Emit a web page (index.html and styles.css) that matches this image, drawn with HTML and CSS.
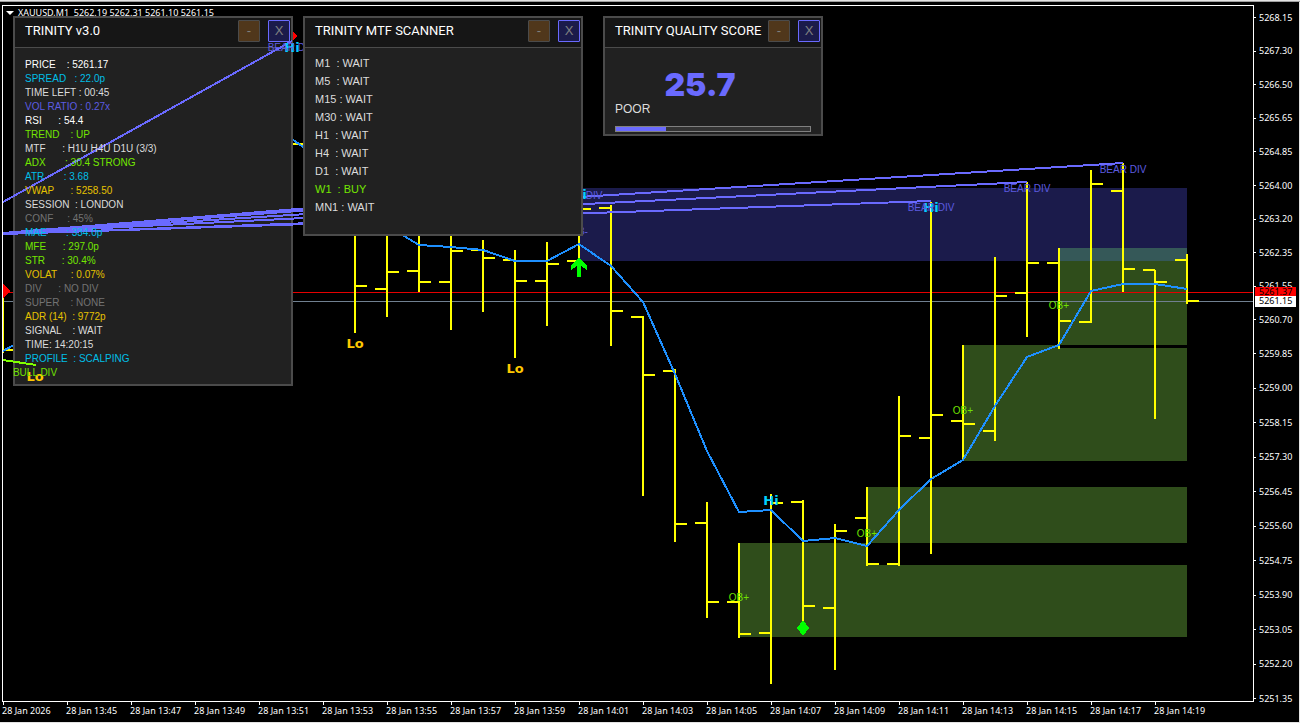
FILE: index.html
```html
<!DOCTYPE html>
<html lang="en">
<head>
    <meta charset="UTF-8">
    <meta name="viewport" content="width=device-width, initial-scale=1.0">
    <title>XAUUSD,M1</title>
    <link rel="stylesheet" href="styles.css">
</head>
<body>

<main class="terminal">
    <section class="plot">
        <h1 class="symbol">
            <svg width="8" height="5" aria-hidden="true"><path d="M0 0h8l-4 4z" fill="#fff"/></svg>
            <span>XAUUSD,M1&nbsp; 5262.19 5262.31 5261.10 5261.15</span>
        </h1>

        <!-- zones, price lines, bars and moving average -->
        <svg class="chart" viewBox="3 6 1250 695" preserveAspectRatio="xMinYMin meet">
            <g class="zones">
                <rect class="supply" x="579" y="188" width="608" height="73"/>
                <path class="demand" d="M1059 261H1187V345H1059zM963 345H1059V348H1187V461H963zM867 487H1187V543H867zM739 543H867V565H1187V637H739z"/>
                <rect class="overlap" x="1059" y="248" width="128" height="13"/>
            </g>
            <g class="levels">
                <rect class="ask" x="3" y="292" width="1250" height="1"/>
                <rect class="bid" x="3" y="301" width="1250" height="1"/>
            </g>
            <g class="bars">
                <path d="M3 297V353M3 350h12M291 144h12"/>
                <path d="M355 225V333M355 286h12"/>
                <path d="M387 225V317M375 289h12M387 272h12"/>
                <path d="M419 225V292M407 271h12M419 282h12"/>
                <path d="M451 225V330M439 282h12M451 251h12"/>
                <path d="M483 240V312M471 250h12M483 258h12"/>
                <path d="M515 250V358M503 260h12M515 281h12"/>
                <path d="M547 242V326M535 281h12M547 264h12"/>
                <path d="M579 200V262M567 261h12M579 209h12"/>
                <path d="M611 205V346M599 208h12M611 311h12"/>
                <path d="M643 316V496M631 317h12M643 375h12"/>
                <path d="M675 369V542M663 371h12M675 524h12"/>
                <path d="M707 502V618M695 523h12M707 602h12"/>
                <path d="M739 543V638M727 602h12M739 634h12"/>
                <path d="M771 494V684M759 633h12M771 503h12"/>
                <path d="M803 500V624M791 502h12M803 606h12"/>
                <path d="M835 524V670M823 608h12M835 531h12"/>
                <path d="M867 487V566M855 518h12M867 564h12"/>
                <path d="M899 396V566M887 564h12M899 436h12"/>
                <path d="M931 202V554M919 438h12M931 415h12"/>
                <path d="M963 345V461M951 421h12M963 424h12"/>
                <path d="M995 257V441M983 431h12M995 296h12"/>
                <path d="M1027 182V337M1015 293h12M1027 263h12"/>
                <path d="M1059 248V349M1047 263h12M1059 321h12"/>
                <path d="M1091 170V323M1079 322h12M1091 184h12"/>
                <path d="M1123 163V292M1111 191h12M1123 269h12"/>
                <path d="M1155 270V419M1143 270h12M1155 282h12"/>
                <path d="M1187 254V304M1175 260h12M1187 301h12"/>
            </g>
            <polyline class="average" points="3,351 14,345"/>
            <polyline class="average" points="292,139 303,147 404,236 419,245 451,247 483,250 515,261 547,261 579,244 611,266 643,302 675,374 707,451 739,512 771,510 803,541 835,538 867,546 899,510 931,479 963,460 995,406 1027,357 1059,345 1091,291 1123,284 1155,284 1187,289"/>
            <path class="sell" d="M3 283l7 8-7 8zM290 28l7 8-7 8z"/>
            <path class="buy" d="M579 258l8 7v5l-6-4v11h-4v-11l-6 4v-5zM803 620l6 8-6 8-6-8z"/>
        </svg>

        <!-- divergence lines and chart labels, drawn over the main panel -->
        <svg class="chart marks" viewBox="3 6 1250 695" preserveAspectRatio="xMinYMin meet">
            <path class="bear-line" d="M3 202L292 41M3 233L579 186M3 233L579 190M3 233L1123 163M3 233L1027 182M3 234L931 201M3 234L583 215"/>
            <path class="bull-line" d="M3 360L36 365"/>
            <g class="swing high">
                <text x="292" y="52">Hi</text>
                <text x="579" y="199">Hi</text>
                <text x="771" y="505">Hi</text>
                <text x="931" y="212">Hi</text>
            </g>
            <g class="swing low">
                <text x="35" y="381">Lo</text>
                <text x="355" y="348">Lo</text>
                <text x="515" y="373">Lo</text>
            </g>
            <g class="tag bear">
                <text x="291" y="51">BEAR DIV</text>
                <text x="579" y="199">BEAR DIV</text>
                <text x="931" y="211">BEAR DIV</text>
                <text x="1027" y="192">BEAR DIV</text>
                <text x="1123" y="173">BEAR DIV</text>
                <text x="579" y="235">OB-</text>
            </g>
            <g class="tag bull">
                <text x="35" y="376">BULL DIV</text>
                <text x="739" y="601">OB+</text>
                <text x="867" y="537">OB+</text>
                <text x="963" y="414">OB+</text>
                <text x="1059" y="309">OB+</text>
            </g>
        </svg>

        <div class="panels">
            <section class="panel">
                <header class="panel-head">
                    <h2>TRINITY v3.0</h2>
                    <button class="minimize" type="button" aria-label="Minimize">-</button>
                    <button class="close" type="button" aria-label="Close">X</button>
                </header>
                <ul class="stats">
                    <li class="white">PRICE    : 5261.17</li>
                    <li class="cyan">SPREAD   : 22.0p</li>
                    <li>TIME LEFT : 00:45</li>
                    <li class="violet">VOL RATIO : 0.27x</li>
                    <li class="white">RSI      : 54.4</li>
                    <li class="green">TREND    : UP</li>
                    <li>MTF      : H1U H4U D1U (3/3)</li>
                    <li class="green">ADX       : 30.4 STRONG</li>
                    <li class="cyan">ATR       : 3.68</li>
                    <li class="gold">VWAP      : 5258.50</li>
                    <li>SESSION  : LONDON</li>
                    <li class="gray">CONF     : 45%</li>
                    <li class="cyan">MAE       : 334.0p</li>
                    <li class="green">MFE      : 297.0p</li>
                    <li class="green">STR      : 30.4%</li>
                    <li class="gold">VOLAT     : 0.07%</li>
                    <li class="gray">DIV      : NO DIV</li>
                    <li class="gray">SUPER    : NONE</li>
                    <li class="gold">ADR (14)  : 9772p</li>
                    <li>SIGNAL    : WAIT</li>
                    <li>TIME: 14:20:15</li>
                    <li class="cyan">PROFILE  : SCALPING</li>
                </ul>
            </section>

            <section class="panel scanner">
                <header class="panel-head">
                    <h2>TRINITY MTF SCANNER</h2>
                    <button class="minimize" type="button" aria-label="Minimize">-</button>
                    <button class="close" type="button" aria-label="Close">X</button>
                </header>
                <ul class="timeframes">
                    <li>M1  : WAIT</li>
                    <li>M5  : WAIT</li>
                    <li>M15 : WAIT</li>
                    <li>M30 : WAIT</li>
                    <li>H1  : WAIT</li>
                    <li>H4  : WAIT</li>
                    <li>D1  : WAIT</li>
                    <li class="green">W1  : BUY</li>
                    <li>MN1 : WAIT</li>
                </ul>
            </section>

            <section class="panel quality">
                <header class="panel-head">
                    <h2>TRINITY QUALITY SCORE</h2>
                    <button class="minimize" type="button" aria-label="Minimize">-</button>
                    <button class="close" type="button" aria-label="Close">X</button>
                </header>
                <div class="score">
                    <p class="score-value">25.7</p>
                    <label for="score">POOR</label>
                    <progress id="score" max="100" value="25.7"></progress>
                </div>
            </section>
        </div>
    </section>

    <aside class="prices">
        <ol class="upper">
            <li>5268.15</li>
            <li>5267.30</li>
            <li>5266.50</li>
            <li>5265.65</li>
            <li>5264.85</li>
            <li>5264.00</li>
            <li>5263.20</li>
            <li>5262.35</li>
            <li>5261.55</li>
            <li>5260.70</li>
        </ol>
        <ol class="lower">
            <li>5259.85</li>
            <li>5259.00</li>
            <li>5258.15</li>
            <li>5257.30</li>
            <li>5256.45</li>
            <li>5255.60</li>
            <li>5254.75</li>
            <li>5253.90</li>
            <li>5253.05</li>
            <li>5252.20</li>
            <li>5251.35</li>
        </ol>
        <div class="quotes">
            <span class="quote-ask">5261.37</span>
            <span class="quote-bid">5261.15</span>
        </div>
    </aside>

    <ol class="times">
        <li>28 Jan 2026</li>
        <li>28 Jan 13:45</li>
        <li>28 Jan 13:47</li>
        <li>28 Jan 13:49</li>
        <li>28 Jan 13:51</li>
        <li>28 Jan 13:53</li>
        <li>28 Jan 13:55</li>
        <li>28 Jan 13:57</li>
        <li>28 Jan 13:59</li>
        <li>28 Jan 14:01</li>
        <li>28 Jan 14:03</li>
        <li>28 Jan 14:05</li>
        <li>28 Jan 14:07</li>
        <li>28 Jan 14:09</li>
        <li>28 Jan 14:11</li>
        <li>28 Jan 14:13</li>
        <li>28 Jan 14:15</li>
        <li>28 Jan 14:17</li>
        <li>28 Jan 14:19</li>
    </ol>
</main>

</body>
</html>
```
FILE: styles.css
```css
* {
    box-sizing: border-box;
}

body {
    margin: 0;
    background: #000;
    color: #fff;
    font-family: "Liberation Sans", Arial, sans-serif;
}

h1, h2, p, ul, ol {
    margin: 0;
    padding: 0;
    font-weight: normal;
    list-style: none;
}

/* Terminal frame */
.terminal {
    display: grid;
    grid-template-columns: minmax(0, 1fr) 46px;
    grid-template-rows: 1fr 21px;
    height: 100vh;
    box-shadow: inset 0 1px #e3e3e3, inset 0 2px #a0a0a0, inset 0 -1px #e3e3e3, inset -1px 0 #e3e3e3;
}

.plot {
    position: relative;
    margin: 5px 0 0 2px;
    border: 1px solid #fff;
    overflow: hidden;
}

.symbol {
    position: absolute;
    top: 0;
    left: 3px;
    display: flex;
    align-items: center;
    gap: 4px;
    font: 9px/14px "Noto Sans", sans-serif;
    white-space: nowrap;
}

/* Chart */
.chart {
    position: absolute;
    top: 0;
    left: 0;
    width: 100%;
    height: 100%;
    shape-rendering: crispEdges;
}

.marks {
    z-index: 2;
    pointer-events: none;
}

.supply {
    fill: #1b1b4b;
}

.demand {
    fill: #2f4d1b;
}

.overlap {
    fill: #355858;
}

.ask {
    fill: #e60000;
}

.bid {
    fill: #708090;
}

.bars {
    fill: none;
    stroke: #ffff00;
    stroke-width: 2;
}

.average {
    fill: none;
    stroke: #1e90ff;
    stroke-width: 2;
}

.sell {
    fill: #ff0000;
}

.buy {
    fill: #00ff00;
}

.bear-line {
    fill: none;
    stroke: #6a6aff;
    stroke-width: 2;
}

.bull-line {
    fill: none;
    stroke: #7fff00;
    stroke-width: 2;
}

.swing {
    font: bold 13px "DejaVu Sans", sans-serif;
    text-anchor: middle;
}

.high {
    fill: #00d0ff;
}

.low {
    fill: #ffc800;
}

.tag {
    font-size: 10px;
    text-anchor: middle;
}

.bear {
    fill: #5c5ce0;
}

.bull {
    fill: #70e000;
}

/* Panels */
.panels {
    position: absolute;
    top: 10px;
    left: 10px;
    display: flex;
    align-items: flex-start;
    gap: 10px;
}

.panel {
    width: 280px;
    height: 370px;
    border: 2px solid #4b4b4b;
    background: #212121;
}

.scanner {
    position: relative;
    z-index: 4;
    height: 220px;
}

.quality {
    width: 220px;
    height: 120px;
    margin-left: 10px;
}

.panel-head {
    display: flex;
    height: 30px;
    padding: 2px 1px 0 10px;
    border-bottom: 1px solid #4b4b4b;
    background: #161616;
}

.panel-head h2 {
    flex: 1;
    min-width: 0;
    font: 13px/21px Roboto, "Liberation Sans", sans-serif;
    white-space: nowrap;
}

.panel-head button {
    flex: none;
    width: 22px;
    height: 22px;
    padding: 0;
    border: 1px solid #4b4b4b;
    border-radius: 1px;
    color: #808080;
    font: 13px/20px "Liberation Sans", Arial, sans-serif;
    cursor: pointer;
}

.panel-head .minimize {
    margin-right: 8px;
    background: #50371b;
}

.panel-head .close {
    border-color: #6a6aff;
    background: #1b1b4b;
}

.stats,
.timeframes {
    position: relative;
    z-index: 3;
    padding: 10px;
    color: #dcdcdc;
}

.stats li,
.timeframes li {
    white-space: pre;
}

.stats {
    font-size: 10px;
    line-height: 14px;
}

.timeframes {
    padding-top: 6px;
    font-size: 11px;
    line-height: 18px;
}

.stats .white {
    color: #fff;
}

.cyan {
    color: #00bfe6;
}

.violet {
    color: #5c5ce0;
}

.green {
    color: #73e600;
}

.gold {
    color: #e6c200;
}

.gray {
    color: #737373;
}

.score {
    padding: 21px 10px 0;
    color: #dcdcdc;
    font-size: 12px;
}

.score-value {
    padding-right: 26px;
    color: #6a6aff;
    font: 900 32px/32px "Inter", sans-serif;
    text-align: center;
}

.score label {
    display: block;
    line-height: 16px;
}

.score progress {
    display: block;
    width: 100%;
    height: 6px;
    margin-top: 9px;
    border: 1px solid #808080;
    background: #333;
    appearance: none;
}

.score progress::-webkit-progress-bar {
    background: #333;
}

.score progress::-webkit-progress-value {
    background: #6a6aff;
}

/* Axes */
.prices {
    position: relative;
    grid-row: 1 / 3;
    grid-column: 2;
    display: flex;
    flex-direction: column;
    padding: 1px 0 7px;
    font: 9px/10px "Noto Sans", sans-serif;
}

.prices ol {
    display: flex;
    flex-direction: column;
}

.prices .upper {
    flex: 336;
}

.prices .lower {
    flex: 380;
}

.prices li {
    flex: 1;
    display: flex;
    align-items: center;
    gap: 3px;
}

.prices li::before {
    content: "";
    width: 2px;
    height: 1px;
    background: #fff;
}

.quotes {
    position: absolute;
    top: 287px;
    left: 1px;
    right: 4px;
    color: #000;
}

.quotes span {
    display: block;
    padding-left: 4px;
}

.quote-ask {
    height: 9px;
    background: #ff0000;
}

.quote-bid {
    height: 11px;
    background: #fff;
}

.times {
    display: flex;
    padding-left: 2px;
    overflow: hidden;
    font: 9px/12px "Noto Sans", sans-serif;
}

.times li {
    flex: 0 0 64px;
    white-space: nowrap;
}

.times li::before {
    content: "";
    display: block;
    width: 1px;
    height: 3px;
    margin-left: 1px;
    background: #fff;
}
```
